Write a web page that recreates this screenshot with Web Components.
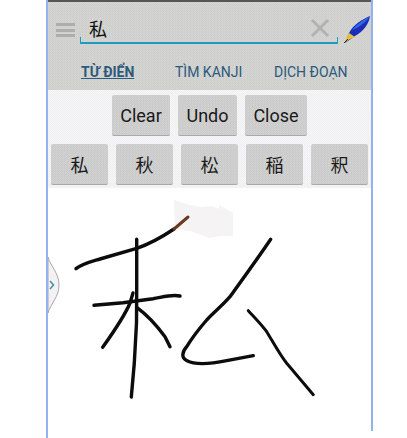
<!DOCTYPE html>
<html><head><meta charset="utf-8"><style>
html,body{margin:0;padding:0;background:#fff;width:407px;height:438px;overflow:hidden}
body{font-family:Roboto,"Noto Sans CJK JP",sans-serif}
</style></head><body>
<template id="t-app"><style>
:host{display:block;box-sizing:border-box;width:327px;height:438px;margin-left:46px;border-left:2px solid #8fb4ee;position:relative;--noise:conic-gradient(#0000 25%,#8080b012 0 50%,#0000 0 75%,#8080b012 0),conic-gradient(#0000 25%,#ffffff14 0 50%,#0000 0 75%,#ffffff14 0)}
.inner{display:flex;flex-direction:column;height:431px;border-right:2px solid #8fb4ee}
::slotted(kd-handle){position:absolute;left:0;top:257px}
</style><div class="inner"><slot></slot></div></template>

<template id="t-header"><style>
:host{display:block;height:90px;box-sizing:border-box;border-top:2px solid #55555a;background:var(--noise),#d3d3cf;background-size:2px 2px,3px 3px,auto}
.top{display:flex;align-items:flex-start;height:33px;padding:11px 0 0 8px;box-sizing:content-box}
.menu{width:19px;height:14px;margin-top:10px;display:flex;flex-direction:column;justify-content:space-between}
.menu i{display:block;height:3px;background:#aeaeae}
.field{width:258px;height:28px;margin:3px 0 0 5px;box-sizing:border-box;border:solid #1e9cc0;border-width:0 1px 2px;border-image:linear-gradient(#0000 78%,#1e9cc0 78%) 1;display:flex;justify-content:space-between;align-items:center;padding:0 7px 2px 8px;font-size:18px;color:#111;font-family:"Noto Sans CJK JP",sans-serif}
.pen{margin:3px 0 0 5px}
</style>
<div class="top"><div class="menu"><i></i><i></i><i></i></div>
<div class="field"><span>私</span><svg width="20" height="20" viewBox="0 0 20 20"><path d="M2 2 18 18M18 2 2 18" stroke="#b2b2b0" stroke-width="3" fill="none"/></svg></div>
<svg class="pen" width="28" height="28" viewBox="0 0 28 28"><path d="M2 27 6 17C10 9 18 4 27 0 26 8 20 16 12 20Z" fill="#1c2cb8"/><path d="M9 14C14 8 20 4 27 0 24 5 19 9 14 12Z" fill="#2a68e0"/><path d="M1 27 6 17 12 21 7 23Z" fill="#e8c030"/><path d="M1 27 5 23" stroke="#333" stroke-width="1"/></svg></div>
<slot></slot></template>

<template id="t-tabs"><style>
:host{display:flex;padding:18px 0 0 33px;font-size:14px;color:#2b5a7d}
</style><slot></slot></template>

<template id="t-tab"><style>
:host{display:block;white-space:nowrap}
</style><slot></slot></template>

<template id="t-row"><style>
:host{display:flex;gap:8px;box-sizing:border-box}
</style><slot></slot></template>

<template id="t-btn"><style>
:host{display:flex;align-items:center;justify-content:center;box-sizing:border-box;height:41px;background:var(--noise),#cfcfcd;background-size:2px 2px,3px 3px,auto;border-bottom:1px solid #a9a9a9;border-radius:2px;font-size:18px;color:#1a1a1a;font-family:Roboto,"Noto Sans CJK JP",sans-serif}
</style><slot></slot></template>

<template id="t-pad"><style>
:host{display:block;position:relative;flex:1;min-height:0}
svg{display:block;position:absolute;left:-48px;top:-188px}
</style><svg width="407" height="438" viewBox="0 0 407 438" fill="none" stroke="#0c0c0c" stroke-width="3.4" stroke-linecap="round" stroke-linejoin="round">
<path d="M174 200 190 205 200 207 212 206 219 209 219 205 233 213 233 236 220 236 209 238 190 231 175 229Z" fill="#f5f3f3" stroke="none"/>
<path d="M76 268.7C82 264 90 262 100 259L136.7 248.3C150 244 165 235 174 229"/>
<path d="M174 229 188 217" stroke="#6a3a20" stroke-width="3"/>
<path d="M136.7 239.3V290L136.5 323 134.3 363 131.3 397"/>
<path d="M94 305.3 123 302.7 153 298.7C163 297 172 294 180 296"/>
<path d="M133 293 130 303C125 315 115 330 102.7 347.3"/>
<path d="M136.7 307.3C146 314 155 323 165 336.7L170 346.7"/>
<path d="M270.7 239.3C258 258 245 276 230 296.7 222 306 214 312 206.7 320 198 330 192 338 186.7 346.7 182 352 181 358 187 360.7 195 365 210 364 226.7 360.7L253.3 355.7"/>
<path d="M248.3 310.7C256 319 262 325 266.7 331.7 273 342 280 355 286.7 363.3L313.3 394.7" stroke-width="3"/>
</svg></template>

<template id="t-handle"><style>
:host{display:block;width:12px;height:56px}
svg{display:block}
</style><svg width="12" height="56" viewBox="0 0 12 56"><path d="M0 0C3 10 11 16 11 28 11 40 3 46 0 56Z" fill="#f2f2f4" stroke="#a8a8a8"/><path d="M2 24 5.5 28 2 32" fill="none" stroke="#4a90a8" stroke-width="1.6"/></svg></template>

<template id="t-panel"><style>
:host{display:flex;flex-direction:column;gap:8px;padding:5px 3px 7px 3px;height:98px;box-sizing:border-box;background:var(--noise),#f6f6f7;background-size:2px 2px,3px 3px,auto}
</style><slot></slot></template>

<kd-app>
<kd-header><kd-tabs>
<kd-tab style="width:94px;font-weight:700;text-decoration:underline">TỪ ĐIỂN</kd-tab>
<kd-tab style="width:99px">TÌM KANJI</kd-tab>
<kd-tab>DỊCH ĐOẠN</kd-tab>
</kd-tabs></kd-header>
<kd-panel>
<kd-row style="padding-left:61px"><kd-btn style="width:58px">Clear</kd-btn><kd-btn style="width:59px">Undo</kd-btn><kd-btn style="width:62px">Close</kd-btn></kd-row>
<kd-row><kd-btn style="width:57px;font-size:18px">私</kd-btn><kd-btn style="width:57px;font-size:18px">秋</kd-btn><kd-btn style="width:57px;font-size:18px">松</kd-btn><kd-btn style="width:57px;font-size:18px">稲</kd-btn><kd-btn style="width:57px;font-size:18px">釈</kd-btn></kd-row>
</kd-panel>
<kd-pad></kd-pad>
<kd-handle></kd-handle>
</kd-app>
<script>
for(const [n,t] of [['kd-app','t-app'],['kd-header','t-header'],['kd-tabs','t-tabs'],['kd-tab','t-tab'],['kd-row','t-row'],['kd-btn','t-btn'],['kd-pad','t-pad'],['kd-handle','t-handle'],['kd-panel','t-panel']]){
customElements.define(n,class extends HTMLElement{constructor(){super();this.attachShadow({mode:'open'}).append(document.getElementById(t).content.cloneNode(true))}});
}
</script>
</body></html>
